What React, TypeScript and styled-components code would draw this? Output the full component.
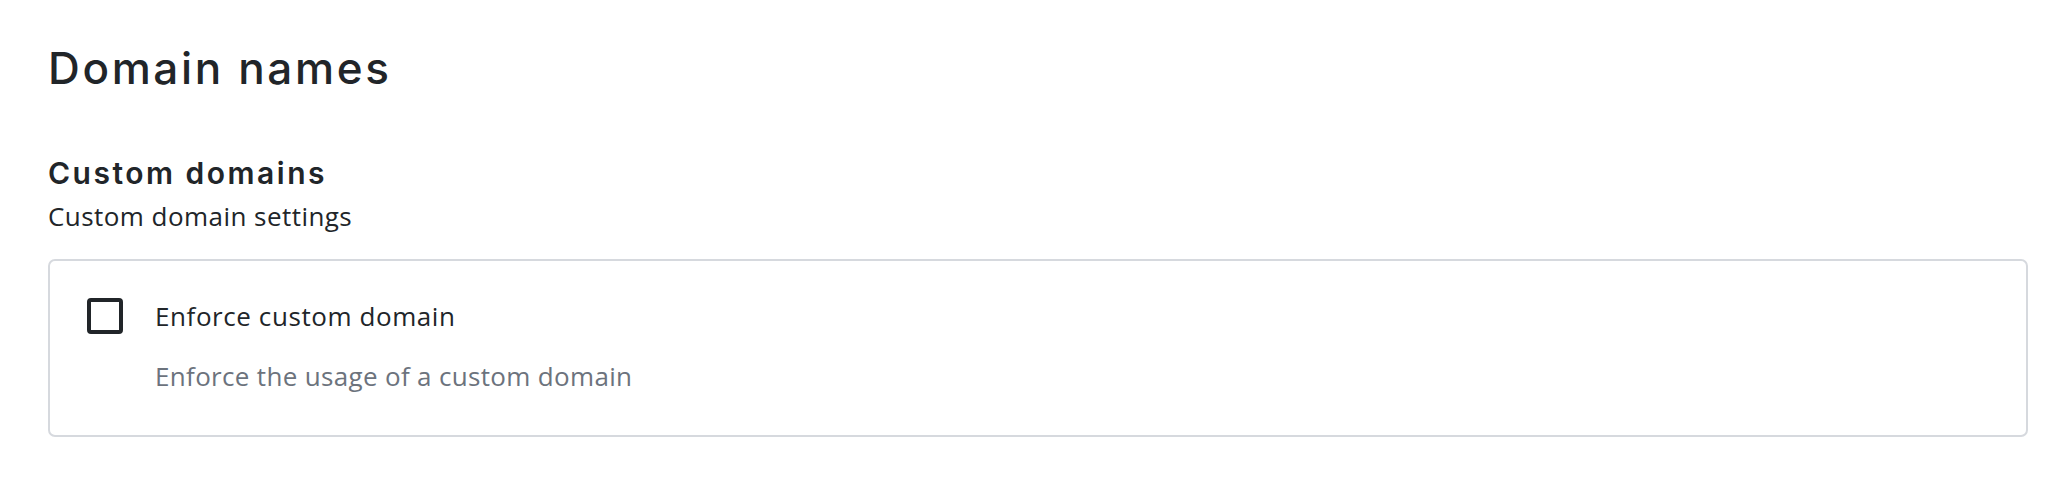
import React from "react";
import styled, { createGlobalStyle } from "styled-components";

const GlobalStyle = createGlobalStyle`
  html, body {
    margin: 0;
    padding: 0;
    background: #ffffff;
  }
  body {
    font-family: "Open Sans", "Noto Sans", sans-serif;
    color: #212529;
  }
`;

const Page = styled.main`
  padding: 42px 38px 40px 48px;
  display: flex;
  flex-direction: column;
`;

const Title = styled.h1`
  margin: 0;
  font-family: Inter, "Open Sans", sans-serif;
  font-weight: 500;
  font-size: 44px;
  line-height: 1.2;
  letter-spacing: 2.65px;
  color: #212529;
`;

const Section = styled.section`
  margin-top: 60px;
  display: flex;
  flex-direction: column;
`;

const SectionTitle = styled.h2`
  margin: 0;
  font-family: Inter, "Open Sans", sans-serif;
  font-weight: 600;
  font-size: 30px;
  line-height: 1.2;
  letter-spacing: 2.5px;
  color: #212529;
`;

const SectionSubtitle = styled.p`
  margin: 7px 0 0;
  font-size: 26px;
  line-height: 37px;
  letter-spacing: 0.45px;
  color: #212529;
`;

const Card = styled.div`
  margin-top: 24px;
  border: 2px solid #d6d9de;
  border-radius: 7px;
  padding: 37px 37px 41px 37px;
`;

const OptionRow = styled.label`
  display: flex;
  align-items: flex-start;
  gap: 32px;
  cursor: pointer;
`;

const Box = styled.span`
  flex: none;
  box-sizing: border-box;
  width: 36px;
  height: 36px;
  border: 4px solid #212529;
  border-radius: 4px;
  background: #ffffff;
`;

const OptionText = styled.div`
  display: flex;
  flex-direction: column;
  gap: 24px;
`;

const OptionLabel = styled.span`
  font-size: 26px;
  line-height: 36px;
  letter-spacing: 0.58px;
  color: #212529;
`;

const OptionHelp = styled.span`
  font-size: 26px;
  line-height: 36px;
  letter-spacing: 0.33px;
  color: #6c737d;
`;

export default function App() {
  return (
    <>
      <GlobalStyle />
      <Page>
        <Title>Domain names</Title>
        <Section>
          <SectionTitle>Custom domains</SectionTitle>
          <SectionSubtitle>Custom domain settings</SectionSubtitle>
          <Card>
            <OptionRow>
              <Box role="checkbox" aria-checked="false" />
              <OptionText>
                <OptionLabel>Enforce custom domain</OptionLabel>
                <OptionHelp>Enforce the usage of a custom domain</OptionHelp>
              </OptionText>
            </OptionRow>
          </Card>
        </Section>
      </Page>
    </>
  );
}
